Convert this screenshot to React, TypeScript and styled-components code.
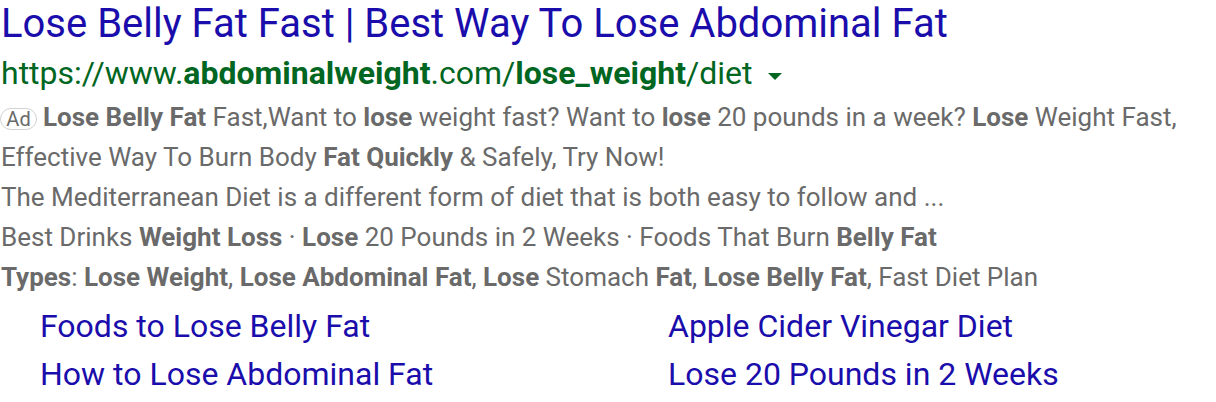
import React from "react";
import styled, { createGlobalStyle } from "styled-components";

const Global = createGlobalStyle`
  html, body { margin: 0; padding: 0; background: #fff; }
  body { font-family: Roboto, "Liberation Sans", Arial, sans-serif; }
`;

const Result = styled.div`
  width: 1216px;
  padding: 0 0 0 1px;
  box-sizing: border-box;
`;

const Title = styled.a`
  display: block;
  color: #1a0dab;
  font-size: 40px;
  line-height: 47px;
  text-decoration: none;
  white-space: nowrap;
`;

const UrlLine = styled.div`
  display: flex;
  align-items: center;
  color: #006621;
  font-size: 32px;
  line-height: 47px;
  padding-top: 3px;
  white-space: nowrap;
`;

const Caret = styled.span`
  display: inline-block;
  width: 0;
  height: 0;
  margin-left: 16px;
  margin-top: 6px;
  border-left: 7px solid transparent;
  border-right: 7px solid transparent;
  border-top: 7px solid #006621;
`;

const Desc = styled.div`
  color: #6a6a6a;
  font-size: 26px;
  line-height: 40px;
  b { font-weight: 700; }
`;

const AdBadge = styled.span`
  display: inline-flex;
  align-items: center;
  justify-content: center;
  box-sizing: border-box;
  width: 37px;
  height: 22px;
  margin-left: -1px;
  border: 1px solid #d2d2d2;
  border-radius: 11px;
  color: #6a6a6a;
  font-size: 20px;
  line-height: 20px;
  margin-right: 6px;
  vertical-align: baseline;
`;

const Sitelinks = styled.div`
  display: grid;
  grid-template-columns: 628px 1fr;
  padding-left: 39px;
  margin-top: 5px;
`;

const SiteLink = styled.a`
  color: #1a0dab;
  font-size: 32px;
  line-height: 48px;
  text-decoration: none;
  white-space: nowrap;
`;

export default function App() {
  return (
    <>
      <Global />
      <Result>
        <Title href="#">Lose Belly Fat Fast | Best Way To Lose Abdominal Fat</Title>
        <UrlLine>
          <span>
            https://www.<b>abdominalweight</b>.com/<b>lose_weight</b>/diet
          </span>
          <Caret />
        </UrlLine>
        <Desc>
          <AdBadge>Ad</AdBadge>
          <b>Lose Belly Fat</b> Fast,Want to <b>lose</b> weight fast? Want to <b>lose</b> 20 pounds in a week?{" "}
          <b>Lose</b> Weight Fast, Effective Way To Burn Body <b>Fat Quickly</b> &amp; Safely, Try Now!
        </Desc>
        <Desc>The Mediterranean Diet is a different form of diet that is both easy to follow and ...</Desc>
        <Desc>
          Best Drinks <b>Weight Loss</b> · <b>Lose</b> 20 Pounds in 2 Weeks · Foods That Burn <b>Belly Fat</b>
        </Desc>
        <Desc>
          <b>Types</b>: <b>Lose Weight</b>, <b>Lose Abdominal Fat</b>, <b>Lose</b> Stomach <b>Fat</b>, <b>Lose Belly Fat</b>, Fast Diet Plan
        </Desc>
        <Sitelinks>
          <SiteLink href="#">Foods to Lose Belly Fat</SiteLink>
          <SiteLink href="#">Apple Cider Vinegar Diet</SiteLink>
          <SiteLink href="#">How to Lose Abdominal Fat</SiteLink>
          <SiteLink href="#">Lose 20 Pounds in 2 Weeks</SiteLink>
        </Sitelinks>
      </Result>
    </>
  );
}
